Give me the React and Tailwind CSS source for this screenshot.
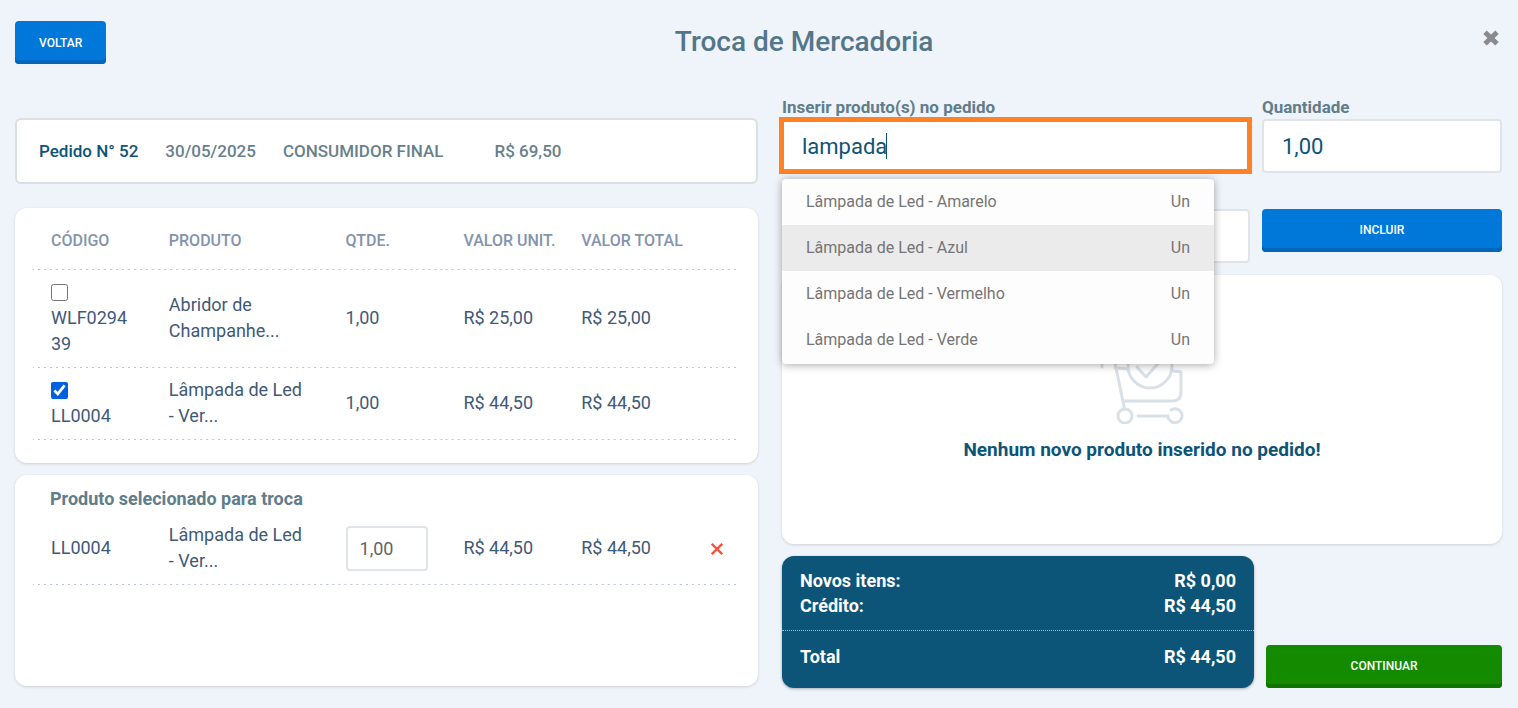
import { useState } from 'react';

const orderItems = [
  { code: 'WLF029439', name: 'Abridor de Champanhe...', qty: '1,00', unit: 'R$ 25,00', total: 'R$ 25,00', checked: false },
  { code: 'LL0004', name: 'Lâmpada de Led - Ver...', qty: '1,00', unit: 'R$ 44,50', total: 'R$ 44,50', checked: true }
];

const suggestions = [
  { name: 'Lâmpada de Led - Amarelo', unit: 'Un' },
  { name: 'Lâmpada de Led - Azul', unit: 'Un' },
  { name: 'Lâmpada de Led - Vermelho', unit: 'Un' },
  { name: 'Lâmpada de Led - Verde', unit: 'Un' }
];

const rowLine =
  'bg-[linear-gradient(90deg,#b9c6d6_2px,transparent_2px)] bg-[length:6px_1px] bg-[position:-1px_100%] bg-repeat-x';
const cell = 'px-[18px] pt-[9px] pb-[11px]';
const field =
  'w-full h-[54px] rounded-[4px] border-2 border-[#dfe4e9] bg-white px-[18px] text-[22px] text-[#0c5478] outline-none';
const fieldLabel = 'block h-[23px] text-[17px] leading-[23px] font-bold text-[#607d8b]';
const card = 'rounded-xl bg-white shadow-[0_1px_3px_rgba(0,0,0,0.14)]';

function App() {
  return (
    <div className="min-h-screen bg-[#eff3fa] pt-[21px] pr-4 pb-5 pl-[15px] font-[Roboto,sans-serif] text-[18px] leading-[26px] text-[#3f5a78]">
      <Header />
      <main className="mt-8 grid grid-cols-[743fr_720fr] gap-6">
        <div className="pt-[22px]">
          <OrderSummary />
          <OrderTable />
          <SelectedProducts />
        </div>
        <div>
          <ProductForm />
          <EmptyState />
          <div className="mt-3 grid grid-cols-[2fr_1fr] items-end gap-3">
            <Totals />
            <Button className="bg-[#148a00] pb-0.5 shadow-[inset_0_-4px_0_#107400]">CONTINUAR</Button>
          </div>
        </div>
      </main>
    </div>
  );
}

function Button({ className, children }) {
  return (
    <button
      type="button"
      className={`h-[43px] rounded-[4px] px-6 text-xs font-medium text-white ${className}`}
    >
      {children}
    </button>
  );
}

function Header() {
  return (
    <header className="relative flex items-center">
      <Button className="bg-[#0078d9] shadow-[inset_0_-4px_0_#0067ba]">VOLTAR</Button>
      <h1 className="flex-1 pb-0.5 text-center text-[28px] font-medium text-[#547689]">Troca de Mercadoria</h1>
      <button type="button" aria-label="Fechar" className="absolute top-[9px] right-[3px]">
        <svg className="h-4 w-4" viewBox="0 0 16 16" stroke="#8a8b8c" strokeWidth="5" strokeLinejoin="round">
          <path d="M2 2.2 14 13.8M14 2.2 2 13.8" />
        </svg>
      </button>
    </header>
  );
}

function OrderSummary() {
  return (
    <section className="flex h-[66px] items-center gap-[27px] rounded-md border-2 border-[#dadfe5] bg-white px-[22px] text-[17px] font-medium text-[#687f8c]">
      <strong className="font-medium text-[#0c5478]">Pedido N° 52</strong>
      <span>30/05/2025</span>
      <span>CONSUMIDOR FINAL</span>
      <span className="ml-6">R$ 69,50</span>
    </section>
  );
}

function Columns() {
  return (
    <colgroup>
      <col className="w-1/6" />
      <col className="w-1/4" />
      <col className="w-1/6" />
      <col className="w-1/6" />
      <col className="w-1/6" />
      <col className="w-1/12" />
    </colgroup>
  );
}

function OrderTable() {
  return (
    <section className={`mt-6 px-[18px] pb-[23px] ${card}`}>
      <table className="w-full table-fixed">
        <Columns />
        <thead>
          <tr className={`text-left text-[16px] whitespace-nowrap text-[#8494ad] ${rowLine}`}>
            {['CÓDIGO', 'PRODUTO', 'QTDE.', 'VALOR UNIT.', 'VALOR TOTAL'].map((title) => (
              <th key={title} className="h-[62px] pt-1 pl-[18px] font-medium">{title}</th>
            ))}
            <td />
          </tr>
        </thead>
        <tbody>
          {orderItems.map((item) => (
            <OrderRow key={item.code} item={item} />
          ))}
        </tbody>
      </table>
    </section>
  );
}

function OrderRow({ item }) {
  const [checked, setChecked] = useState(item.checked);

  return (
    <tr className={rowLine}>
      <td className={cell}>
        <label className="block break-all">
          <span className="flex h-[26px] items-center">
            <input
              type="checkbox"
              checked={checked}
              onChange={() => setChecked(!checked)}
              className="h-[17px] w-[17px] accent-[#0060df]"
            />
          </span>
          {item.code}
        </label>
      </td>
      <td className={cell}>{item.name}</td>
      <td className={cell}>{item.qty}</td>
      <td className={cell}>{item.unit}</td>
      <td className={cell}>{item.total}</td>
      <td />
    </tr>
  );
}

function SelectedProducts() {
  return (
    <section className={`mt-3 min-h-[211px] px-[18px] ${card}`}>
      <h2 className="px-[17px] pt-[11px] pb-px font-bold text-[#607d8b]">Produto selecionado para troca</h2>
      <table className="w-full table-fixed">
        <Columns />
        <tbody>
          <tr className={rowLine}>
            <td className={cell}>LL0004</td>
            <td className={cell}>Lâmpada de Led - Ver...</td>
            <td className="pt-[9px] pb-[11px] pl-[18px]">
              <input
                aria-label="Quantidade para troca"
                defaultValue="1,00"
                className="block h-[45px] w-[82px] rounded-[4px] border-2 border-[#dfe4e9] px-3 text-[#5f6368]"
              />
            </td>
            <td className={cell}>R$ 44,50</td>
            <td className={cell}>R$ 44,50</td>
            <td className="pl-[30px]">
              <button type="button" aria-label="Remover" className="block">
                <svg className="h-3 w-3" viewBox="0 0 12 12" stroke="#f4533f" strokeWidth="2.3">
                  <path d="M.8.8l10.4 10.4M11.2.8.8 11.2" />
                </svg>
              </button>
            </td>
          </tr>
        </tbody>
      </table>
    </section>
  );
}

function ProductForm() {
  const [search, setSearch] = useState('lampada');

  return (
    <div className="grid grid-cols-[39fr_20fr] gap-x-3">
      <div>
        <label htmlFor="product" className={fieldLabel}>
          Inserir produto(s) no pedido
        </label>
        <div className="relative">
          <input
            id="product"
            value={search}
            onChange={(e) => setSearch(e.target.value)}
            className={field}
          />
          <span className="pointer-events-none absolute -top-0.5 -right-0.5 -bottom-px -left-[3px] border-[5px] border-[#ff8126]" />
          {/* Text cursor */}
          <span className="absolute top-[14px] left-[104px] h-[26px] w-px bg-[#0c5478]" />
          <Suggestions />
        </div>
      </div>
      <div>
        <label htmlFor="quantity" className={fieldLabel}>
          Quantidade
        </label>
        <input id="quantity" defaultValue="1,00" className={field} />
      </div>
      <input aria-label="Detalhes do produto" className={`mt-9 ${field}`} />
      <Button className="mt-9 bg-[#0078d9] pb-0.5 shadow-[inset_0_-4px_0_#0067ba]">INCLUIR</Button>
    </div>
  );
}

function Suggestions() {
  return (
    <ul className="absolute top-[60px] left-0 z-10 w-[432px] overflow-hidden rounded-[4px] bg-[#fdfdfd] pb-px text-[16px] text-[#757575] shadow-[0_1px_8px_rgba(0,0,0,0.35)]">
      {suggestions.map((item, index) => (
        <li
          key={item.name}
          className={`flex justify-between px-6 py-[10px] ${index === 1 ? 'bg-[#ebebeb]' : ''}`}
        >
          <span>{item.name}</span>
          <span>{item.unit}</span>
        </li>
      ))}
    </ul>
  );
}

function EmptyState() {
  return (
    <section className={`mt-3 flex h-[269px] flex-col items-center pt-[65px] ${card}`}>
      <CartIcon />
      <p className="mt-[13px] text-[19px] font-bold text-[#0c5478]">Nenhum novo produto inserido no pedido!</p>
    </section>
  );
}

function CartIcon() {
  return (
    <svg
      className="h-[84px] w-[84px]"
      viewBox="0 0 84 84"
      fill="none"
      stroke="#d9e1e8"
      strokeWidth="3"
      strokeLinecap="round"
      strokeLinejoin="round"
    >
      <path d="M2 27v-4q0-4 4-4h4q4 0 5 4l9.500 46" />
      <path d="M15 28l13 1M73 31l8 1v20q0 9-9 9H24" />
      <circle cx="50" cy="26" r="22" />
      <path d="M37 27l9 10 17-19" />
      <circle cx="25" cy="76" r="7" />
      <path d="M38 76h30M71 70a7 7 0 1 1-3 6" />
    </svg>
  );
}

function Totals() {
  return (
    <dl className="rounded-xl bg-[#0c5478] leading-[25px] font-bold text-white shadow-[0_1px_3px_rgba(0,0,0,0.3)]">
      <div className="border-b border-dotted border-[#9fbccb] px-[18px] pt-3 pb-3">
        <TotalLine label="Novos itens:" value="R$ 0,00" />
        <TotalLine label="Crédito:" value="R$ 44,50" />
      </div>
      <div className="px-[18px] pt-[13px] pb-[19px]">
        <TotalLine label="Total" value="R$ 44,50" />
      </div>
    </dl>
  );
}

function TotalLine({ label, value }) {
  return (
    <div className="flex justify-between">
      <dt>{label}</dt>
      <dd>{value}</dd>
    </div>
  );
}

export default App;
